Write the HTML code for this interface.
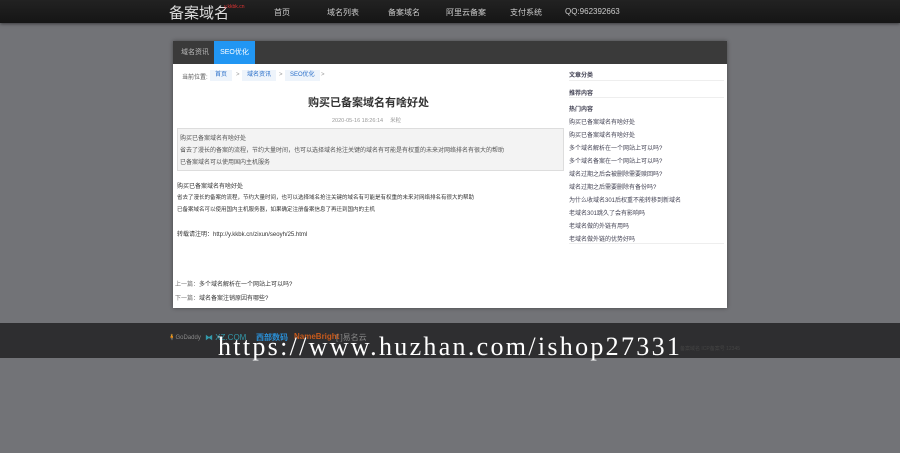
<!DOCTYPE html>
<html><head><meta charset="utf-8"><style>
*{margin:0;padding:0;box-sizing:border-box}
body{width:900px;height:453px;background:#727377;font-family:"Liberation Sans","Noto Sans CJK SC",sans-serif;position:relative;overflow:hidden}
.hd{position:absolute;left:0;top:0;width:900px;height:23px;background:linear-gradient(#222,#151515);box-shadow:0 1px 3px rgba(0,0,0,.5)}
.logo{position:absolute;left:169px;top:2px;font-size:15px;color:#ddd}
.logo sup{font-size:5px;color:#d33;position:absolute;left:55px;top:2px}
.nav a{position:absolute;top:7px;font-size:8px;color:#ccc;text-decoration:none}
.card{position:absolute;left:173px;top:41px;width:554px;height:267px;background:#fff;box-shadow:0 0 4px rgba(0,0,0,.4)}
.tabs{height:23px;background:#3a3a3a;position:relative}
.tabs span{position:absolute;top:0;height:23px;line-height:23px;font-size:7px;color:#bbb}
.tabs .on{background:#2196f3;color:#fff;left:41px;width:41px;text-align:center}
.s{position:absolute;font-size:6px;color:#333;white-space:nowrap}
.bc{position:absolute;top:70px;height:11px;line-height:11px;background:#eef4fb;color:#2a6fc9;font-size:6px;padding:0 5px}
.box{position:absolute;left:177px;top:128px;width:387px;height:43px;background:#f3f3f3;border:1px solid #ddd}
.side{position:absolute;left:569px;font-size:6px;color:#445}
.ln{position:absolute;left:569px;width:155px;height:1px;background:#eee}
.ft{position:absolute;left:0;top:323px;width:900px;height:35px;background:#2e2e30}
.wm{position:absolute;left:218px;top:332px;font-family:"Liberation Serif",serif;font-size:26px;color:#fff;letter-spacing:2.3px;white-space:nowrap}
</style></head><body>
<div class="hd">
<div class="logo">备案域名<sup>y.kkbk.cn</sup></div>
<div class="nav"><a style="left:274px">首页</a><a style="left:327px">域名列表</a><a style="left:388px">备案域名</a><a style="left:446px">阿里云备案</a><a style="left:510px">支付系统</a><a style="left:565px">QQ:962392663</a></div>
</div>
<div class="card"><div class="tabs"><span style="left:8px">域名资讯</span><span class="on">SEO优化</span></div></div>
<div class="s" style="left:182px;top:72px;color:#555">当前位置:</div>
<div class="bc" style="left:210px">首页</div><div class="s" style="left:236px;top:72px;color:#999">&gt;</div>
<div class="bc" style="left:242px">域名资讯</div><div class="s" style="left:279px;top:72px;color:#999">&gt;</div>
<div class="bc" style="left:285px">SEO优化</div><div class="s" style="left:321px;top:72px;color:#999">&gt;</div>
<div class="s" style="left:308px;top:94px;font-size:11px;font-weight:bold;color:#333">购买已备案域名有啥好处</div>
<div class="s" style="left:332px;top:116px;color:#999;font-size:5.5px">2020-05-16 18:26:14 　米粒</div>
<div class="box"></div>
<div class="s" style="left:180px;top:133px;color:#555">购买已备案域名有啥好处</div>
<div class="s" style="left:180px;top:145px;color:#555">省去了漫长的备案的流程，节约大量时间，也可以选择域名抢注关键的域名有可能是有权重的未来对网络排名有很大的帮助</div>
<div class="s" style="left:180px;top:157px;color:#555">已备案域名可以使用国内主机服务</div>
<div class="s" style="left:177px;top:181px">购买已备案域名有啥好处</div>
<div class="s" style="left:177px;top:193px;font-size:5.5px">省去了漫长的备案的流程，节约大量时间，也可以选择域名抢注关键的域名有可能是有权重的未来对网络排名有很大的帮助</div>
<div class="s" style="left:177px;top:205px;font-size:5.5px"> 已备案域名可以使用国内主机服务器，如果确定注册备案信息了再迁到国内的主机</div>
<div class="s" style="left:177px;top:229px">转载请注明：http://y.kkbk.cn/zixun/seoyh/25.html</div>
<div class="s" style="left:175px;top:279px"><span style="color:#777">上一篇：</span>多个域名解析在一个网站上可以吗?</div>
<div class="s" style="left:175px;top:293px"><span style="color:#777">下一篇：</span>域名备案注销原因有哪些?</div>
<div class="side" style="top:70px;font-weight:bold">文章分类</div><div class="ln" style="top:80px"></div>
<div class="side" style="top:88px;font-weight:bold">推荐内容</div><div class="ln" style="top:97px"></div>
<div class="side" style="top:104px;font-weight:bold">热门内容</div>
<div class="side" style="top:117px">购买已备案域名有啥好处</div>
<div class="side" style="top:130px">购买已备案域名有啥好处</div>
<div class="side" style="top:143px">多个域名解析在一个网站上可以吗?</div>
<div class="side" style="top:156px">多个域名备案在一个网站上可以吗?</div>
<div class="side" style="top:169px">域名过期之后会被删除需要赎回吗?</div>
<div class="side" style="top:182px">域名过期之后需要删除有备份吗?</div>
<div class="side" style="top:195px">为什么收域名301后权重不能转移到新域名</div>
<div class="side" style="top:208px">老域名301跳久了会有影响吗</div>
<div class="side" style="top:221px">老域名做的外链有用吗</div>
<div class="side" style="top:234px">老域名做外链的优势好吗</div>
<div class="ln" style="top:243px"></div>
<div class="ft">
<div class="s" style="left:168px;top:11px;color:#888;font-size:6px">🧍GoDaddy</div>
<div class="s" style="left:205px;top:10px;color:#39a;font-size:8px">⧓ XZ.COM</div>
<div class="s" style="left:256px;top:9px;color:#2a8fd6;font-size:8px;font-weight:bold">西部数码</div>
<div class="s" style="left:294px;top:9px;color:#c85a1c;font-size:8px;font-weight:bold">NameBright</div>
<div class="s" style="left:336px;top:9px;color:#888;font-size:8px">[ ]易名云</div>
<div class="s" style="left:680px;top:22px;color:#444;font-size:5px">备案域名 ICP备案号 12345</div>
</div>
<div class="wm">https://www.huzhan.com/ishop27331</div>
</body></html>
